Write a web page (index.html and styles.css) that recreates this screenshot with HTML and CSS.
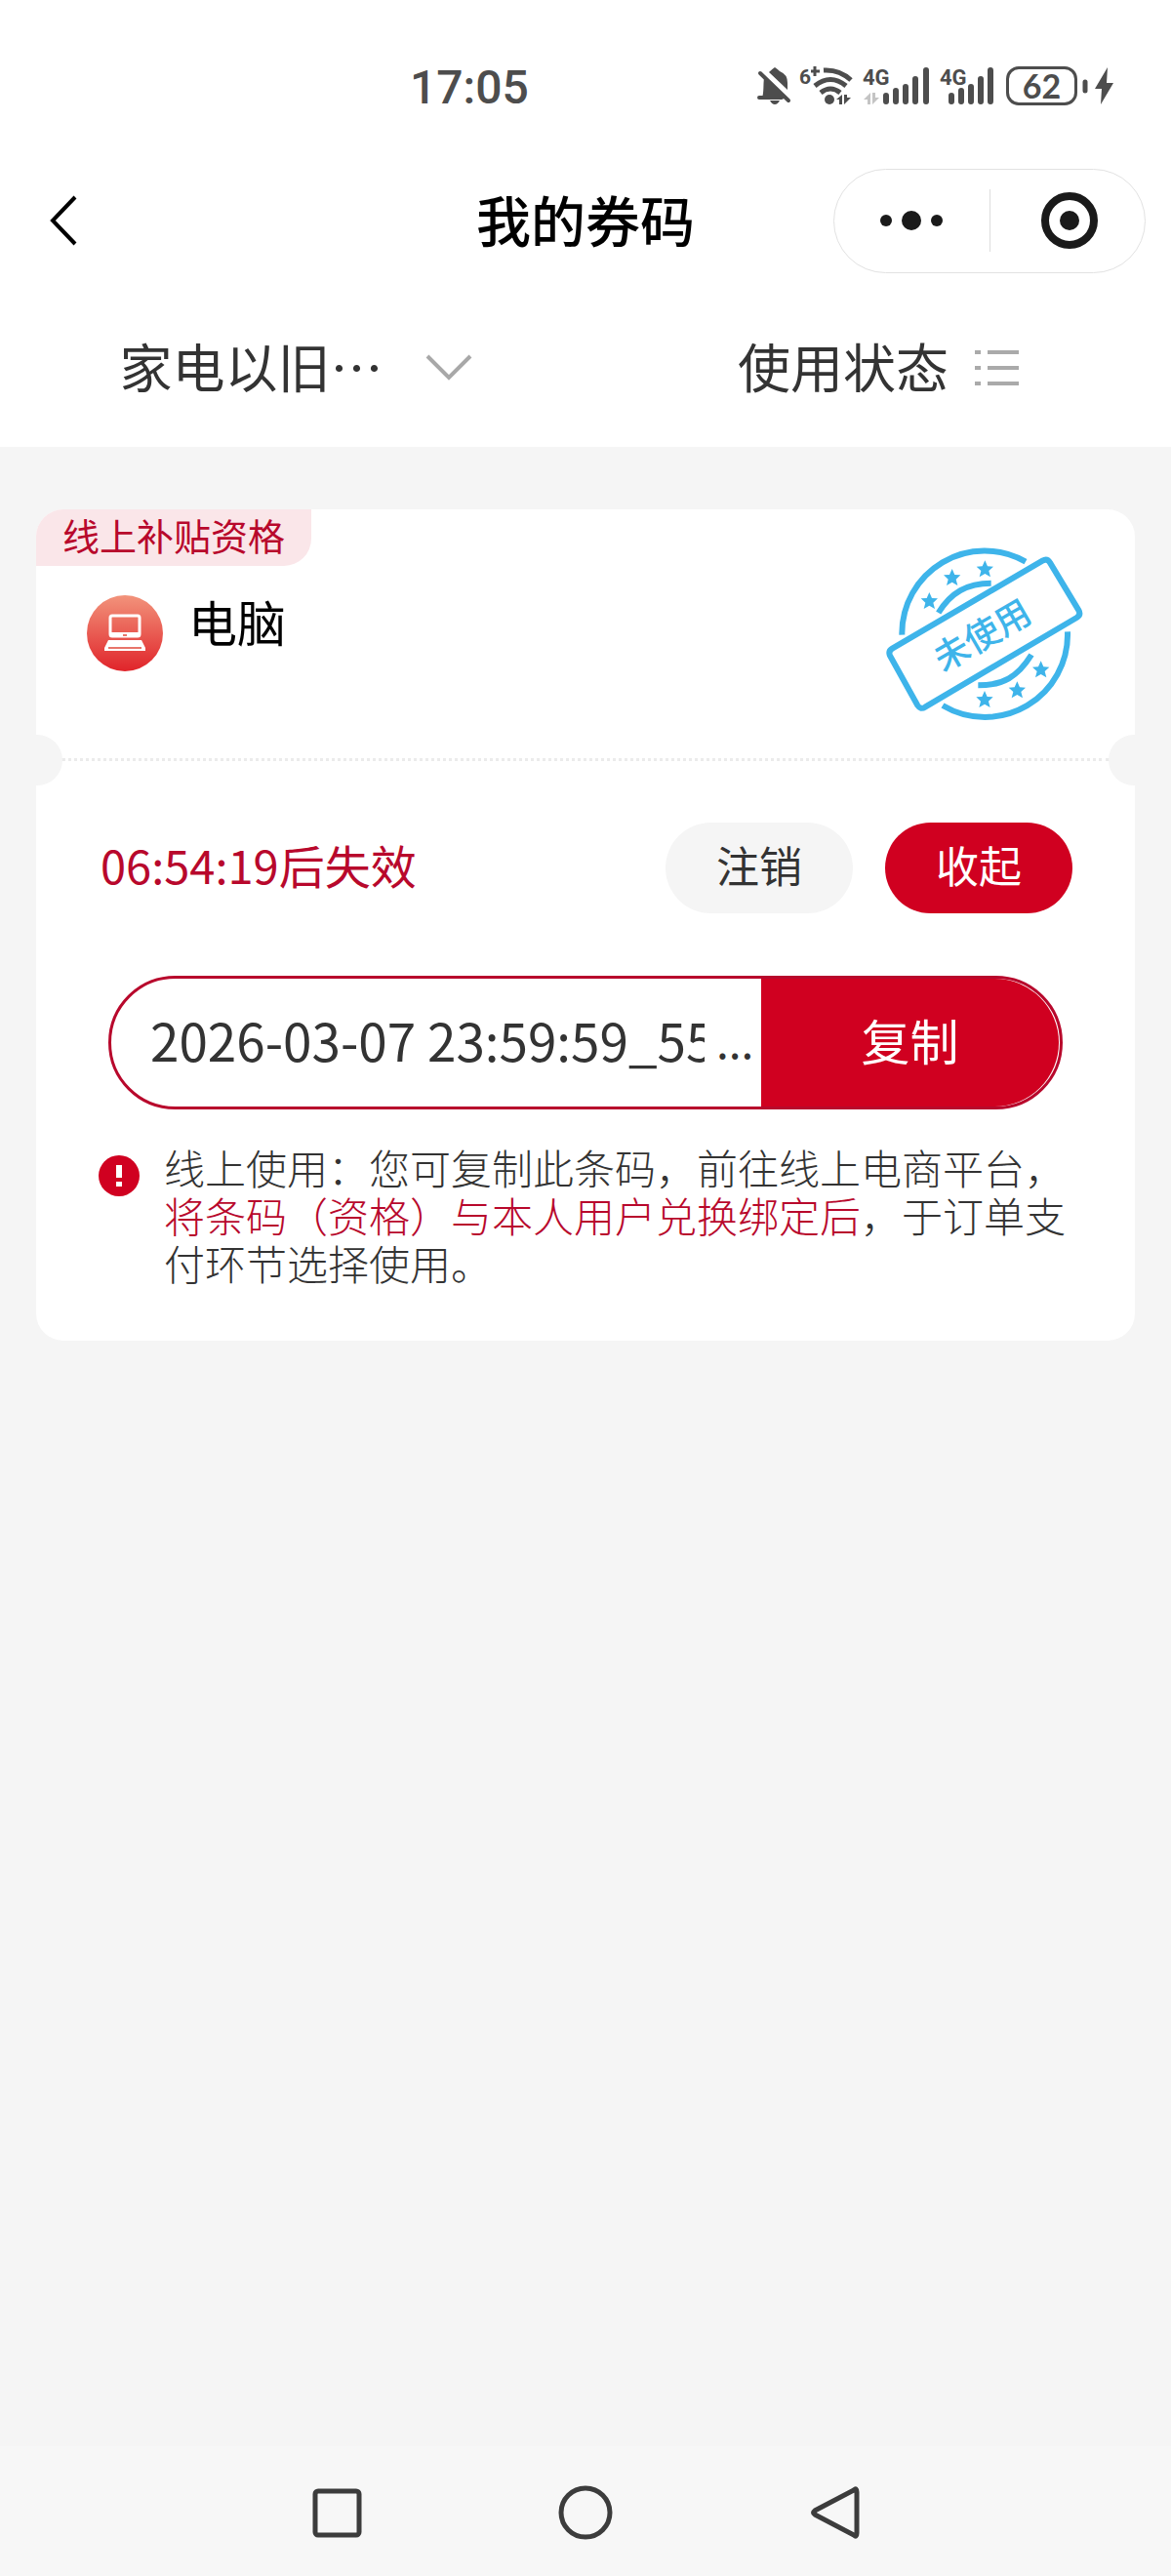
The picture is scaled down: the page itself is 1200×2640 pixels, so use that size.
FILE: index.html
```html
<!DOCTYPE html>
<html lang="zh-CN">
  <head>
    <meta charset="UTF-8" />
    <meta name="viewport" content="width=device-width, initial-scale=1.0" />
    <title>我的券码</title>
    <link rel="stylesheet" href="styles.css">
  </head>

  <body>
    <!-- 顶部 -->
    <header class="header">
      <div class="status">
        <span class="time">17:05</span>
        <div class="status-icons">
          <svg width="34" height="42" viewBox="0 0 34 42">
            <path d="M4 32C6 27 5 18 6 12L27 32Z M11 6Q14 3 17 1Q20 3 22 5Q30 8 30 17V24Z M12 35H22Q20 39 17 39Q14 39 12 35Z" fill="#4d4d4d" />
            <path d="M2 7L31 35M1 32H24" stroke="#4d4d4d" stroke-width="4" stroke-linecap="round" />
          </svg>
          <svg width="54" height="42" viewBox="0 0 54 42">
            <text x="-2" y="18" font-size="21">6</text>
            <path d="M10 5H19M14 0V10" stroke="#4d4d4d" stroke-width="3" />
            <path d="M23 4Q39 3 51 14M14 20Q30 7 46 20M20 27Q30 19 40 27" fill="none" stroke="#4d4d4d" stroke-width="5" />
            <circle cx="29" cy="34" r="5" fill="#4d4d4d" />
            <path d="M36 34L42 29V39H39V34ZM44 29V39L51 32H47V29Z" fill="#4d4d4d" />
          </svg>
          <svg width="68" height="42" viewBox="0 0 68 42">
            <text x="-1" y="19" font-size="22">4G</text>
            <path d="M0 34L7 27V39H4V34ZM9 27V39L16 32H12V27Z" fill="#c4c4c4" />
            <path d="M23 30V36M33 25V36M43 21V36M53 13V36M64 4V36" stroke="#4d4d4d" stroke-width="6" stroke-linecap="round" />
          </svg>
          <svg width="58" height="42" viewBox="0 0 58 42">
            <text x="0" y="19" font-size="22">4G</text>
            <path d="M12 30V36M22 25V36M32 21V36M42 13V36M52 4V36" stroke="#4d4d4d" stroke-width="6" stroke-linecap="round" />
          </svg>
          <span class="battery">62</span>
          <svg width="28" height="42" viewBox="0 0 28 42">
            <path d="M-2 16V25" stroke="#4d4d4d" stroke-width="5" stroke-linecap="round" />
            <path d="M21 1L8 23H15L14 39L27 17H20Z" fill="#4d4d4d" />
          </svg>
        </div>
      </div>

      <div class="nav">
        <button class="back" aria-label="返回">
          <svg width="30" height="54" viewBox="0 0 30 54">
            <path d="M27 3L4 27L27 51" fill="none" stroke="#000" stroke-width="4" />
          </svg>
        </button>
        <h1>我的券码</h1>
        <div class="capsule">
          <button aria-label="更多">
            <svg width="64" height="60" viewBox="0 0 64 60" fill="#1a1a1a">
              <circle cx="6" cy="30" r="6" />
              <circle cx="32" cy="30" r="10" />
              <circle cx="58" cy="30" r="6" />
            </svg>
          </button>
          <button aria-label="关闭">
            <svg width="60" height="60" viewBox="0 0 60 60">
              <circle cx="32" cy="30" r="25" fill="none" stroke="#1a1a1a" stroke-width="8" />
              <circle cx="32" cy="30" r="10" fill="#1a1a1a" />
            </svg>
          </button>
        </div>
      </div>

      <div class="filter">
        <label class="type">
          <select aria-label="活动">
            <option>家电以旧…</option>
          </select>
          <svg width="48" height="30" viewBox="0 0 48 30">
            <path d="M2 3L24 25L46 3" fill="none" stroke="#a8a8a8" stroke-width="4" />
          </svg>
        </label>
        <label>
          <select aria-label="使用状态">
            <option>使用状态</option>
          </select>
          <svg width="48" height="42" viewBox="0 0 48 42">
            <path d="M1 5H7M14 5H46M1 21H7M14 21H46M1 37H7M14 37H46" stroke="#aaa" stroke-width="4" />
          </svg>
        </label>
      </div>
    </header>

    <!-- 券码列表 -->
    <main class="list">
      <div class="card">
        <div class="top">
          <span class="tag">线上补贴资格</span>
          <div class="goods">
            <svg width="78" height="78" viewBox="0 0 78 78">
              <defs>
                <linearGradient id="red" x1="0" y1="0" x2="0" y2="1">
                  <stop offset="0" stop-color="#f2937b" />
                  <stop offset="1" stop-color="#e0242a" />
                </linearGradient>
              </defs>
              <circle cx="39" cy="39" r="39" fill="url(#red)" />
              <rect x="24" y="21" width="30" height="21" rx="2" fill="none" stroke="#fff" stroke-width="3" />
              <path d="M24 38H54V43H24Z M22 46H56L60 54V57H18V54Z" fill="#fff" />
              <path d="M22 54H56M37 41H41" stroke="#e8756a" stroke-width="2" />
            </svg>
            <span class="name">电脑</span>
            <svg class="stamp" width="204" height="180" viewBox="148 88 612 540">
              <g fill="none" stroke="#3eb4ea" stroke-width="18">
                <path d="M200 360A254 254 0 0 1 580 135" />
                <path d="M709 350A254 254 0 0 1 325 577" />
                <path d="M312 292C350 230 400 201 474 201" />
                <path d="M434 515C510 515 555 490 598 421" />
                <path d="M170 402L632 132Q646 124 655 138L743 284Q751 298 737 307L271 582Q257 591 248 577L163 424Q157 410 170 402Z" />
              </g>
              <defs>
                <path id="star" d="M0-27L8-9L26-8L12 5L17 24L0 14L-17 24L-12 5L-26-8L-8-9Z" fill="#3eb4ea" />
              </defs>
              <use href="#star" x="455" y="158" />
              <use href="#star" x="354" y="184" />
              <use href="#star" x="284" y="256" />
              <use href="#star" x="627" y="467" />
              <use href="#star" x="554" y="530" />
              <use href="#star" x="454" y="559" />
              <text x="447" y="400" transform="rotate(-30 447 362)">未使用</text>
            </svg>
          </div>
        </div>

        <div class="line"></div>

        <div class="bottom">
          <div class="row">
            <span class="expire">06:54:19后失效</span>
            <button class="btn">注销</button>
            <button class="btn red">收起</button>
          </div>
          <div class="code">
            <input type="text" aria-label="条码" value="2026-03-07 23:59:59_55" readonly />
            <span class="more">...</span>
            <button class="copy">复制</button>
          </div>
          <div class="tips">
            <svg width="42" height="42" viewBox="0 0 42 42">
              <circle cx="21" cy="21" r="21" fill="#d00020" />
              <path d="M21 10V23M21 27V32" stroke="#fff" stroke-width="6" />
            </svg>
            <p>线上使用：您可复制此条码，前往线上电商平台，<em>将条码（资格）与本人用户兑换绑定后</em>，于订单支付环节选择使用。</p>
          </div>
        </div>
      </div>
    </main>

    <!-- 系统导航 -->
    <footer class="keys">
      <button aria-label="最近任务">
        <svg width="60" height="60" viewBox="0 0 60 60">
          <rect x="8" y="8" width="45" height="45" rx="3" />
        </svg>
      </button>
      <button aria-label="主页">
        <svg width="60" height="60" viewBox="0 0 60 60">
          <circle cx="30" cy="30" r="25" />
        </svg>
      </button>
      <button aria-label="后退">
        <svg width="60" height="60" viewBox="0 0 60 60">
          <path d="M50 7Q53 4 53 9V51Q53 56 50 53L10 32Q7 30 10 28Z" />
        </svg>
      </button>
    </footer>
  </body>
</html>
```
FILE: styles.css
```css
* {
  box-sizing: border-box;
}

body {
  margin: 0;
  min-height: 100vh;
  display: flex;
  flex-direction: column;
  background: #f5f5f5;
  color: #333;
  font-family: "Noto Sans CJK SC", sans-serif;
}

svg {
  display: block;
  flex: none;
  overflow: visible;
}

button {
  border: none;
  padding: 0;
  background: none;
  color: inherit;
  font-family: inherit;
  cursor: pointer;
}

.header {
  background: #fff;
}

/* 状态栏 */
.status {
  height: 172px;
  padding: 68px 58px 0 420px;
  display: flex;
  justify-content: space-between;
  color: #4d4d4d;
}

.status .time {
  font: 500 48px/44px Roboto, sans-serif;
}

.status-icons {
  display: flex;
  height: 42px;
  gap: 10px;
}

.status-icons text {
  font-family: Roboto, sans-serif;
  font-weight: 700;
  fill: #4d4d4d;
}

.battery {
  width: 73px;
  height: 40px;
  border: 3px solid #4d4d4d;
  border-radius: 13px;
  font: 700 34px/34px Lato, sans-serif;
  text-align: center;
}

/* 标题栏 */
.nav {
  height: 108px;
  padding: 0 26px;
  display: grid;
  grid-template-columns: 1fr auto 1fr;
  align-items: center;
}

.nav .back {
  justify-self: start;
  padding-left: 24px;
}

.nav h1 {
  margin: 0;
  padding-bottom: 4px;
  color: #000;
  font-size: 56px;
  line-height: 80px;
  font-weight: 500;
}

.capsule {
  justify-self: end;
  width: 320px;
  height: 107px;
  border: 1px solid #e2e2e2;
  border-radius: 54px;
  display: flex;
  align-items: center;
}

.capsule button {
  flex: 1;
  height: 64px;
  display: flex;
  align-items: center;
  justify-content: center;
}

.capsule button + button {
  border-left: 1px solid #ddd;
}

/* 筛选 */
.filter {
  height: 178px;
  padding: 16px 0 0 4px;
  display: flex;
}

.filter label {
  flex: 1;
  display: flex;
  align-items: center;
  justify-content: center;
  gap: 26px;
}

.filter .type {
  gap: 43px;
}

.filter select {
  appearance: none;
  border: none;
  padding: 0 0 4px;
  background: none;
  color: #333;
  font-family: inherit;
  font-size: 54px;
  line-height: 80px;
}

/* 券码卡片 */
.list {
  flex: 1;
  padding: 64px 37px;
}

.card {
  background: #fff;
  border-radius: 28px;
  position: relative;
}

.top {
  height: 255px;
}

.tag {
  display: inline-block;
  vertical-align: top;
  height: 58px;
  padding: 0 27px;
  border-radius: 28px 0 28px 0;
  background: #fae6e9;
  color: #b8082c;
  font-size: 38px;
  line-height: 52px;
}

.goods {
  display: flex;
  align-items: flex-start;
  padding: 30px 52px 0 52px;
}

.goods .name {
  margin-left: 26px;
  color: #000;
  font-size: 50px;
  line-height: 52px;
}

.stamp {
  margin: -50px 0 0 auto;
}

.stamp text {
  fill: #3eb4ea;
  font-size: 108px;
  font-weight: 500;
  text-anchor: middle;
}

.line {
  margin: 0 26px;
  border-top: 3px dotted #ebebeb;
}

/* 两侧缺口 */
.line::before,
.line::after {
  content: "";
  position: absolute;
  top: 231px;
  left: 0;
  width: 27px;
  height: 52px;
  border-radius: 0 26px 26px 0;
  background: #f5f5f5;
}

.line::after {
  left: auto;
  right: 0;
  border-radius: 26px 0 0 26px;
}

.bottom {
  padding: 63px 64px 56px;
}

.row {
  display: flex;
  align-items: center;
}

.expire {
  flex: 1;
  padding: 0 0 8px 2px;
  color: #b8082c;
  font-size: 47px;
  line-height: 84px;
}

.btn {
  width: 192px;
  height: 93px;
  margin-left: 33px;
  padding-bottom: 8px;
  border-radius: 47px;
  background: #f5f5f5;
  font-size: 44px;
}

.btn.red {
  background: #d00020;
  color: #fff;
}

.code {
  height: 137px;
  margin: 64px 10px 34px;
  padding-left: 40px;
  border: 3px solid #b8082c;
  border-radius: 69px;
  display: flex;
  align-items: center;
}

.code input {
  flex: 1;
  min-width: 0;
  height: 88px;
  border: none;
  outline: none;
  padding: 0 0 8px;
  background: none;
  color: #333;
  font-family: inherit;
  font-size: 53px;
}

.code .more {
  width: 58px;
  padding: 0 0 8px 12px;
  font-size: 46px;
}

.code .copy {
  width: 305px;
  height: 131px;
  margin-right: 1px;
  padding-bottom: 8px;
  border-radius: 0 69px 69px 0;
  background: #d00020;
  color: #fff;
  font-size: 50px;
}

.tips {
  display: flex;
  gap: 25px;
}

.tips svg {
  margin-top: 13px;
}

.tips p {
  margin: 0;
  font-size: 42px;
  line-height: 49px;
  font-weight: 300;
}

.tips em {
  color: #b8082c;
  font-style: normal;
}

/* 系统按键 */
.keys {
  height: 133px;
  padding-top: 2px;
  background: #f7f7f7;
  display: flex;
  align-items: center;
  justify-content: center;
  gap: 195px;
}

.keys svg {
  fill: none;
  stroke: #3c3c3c;
  stroke-width: 5;
}
```
